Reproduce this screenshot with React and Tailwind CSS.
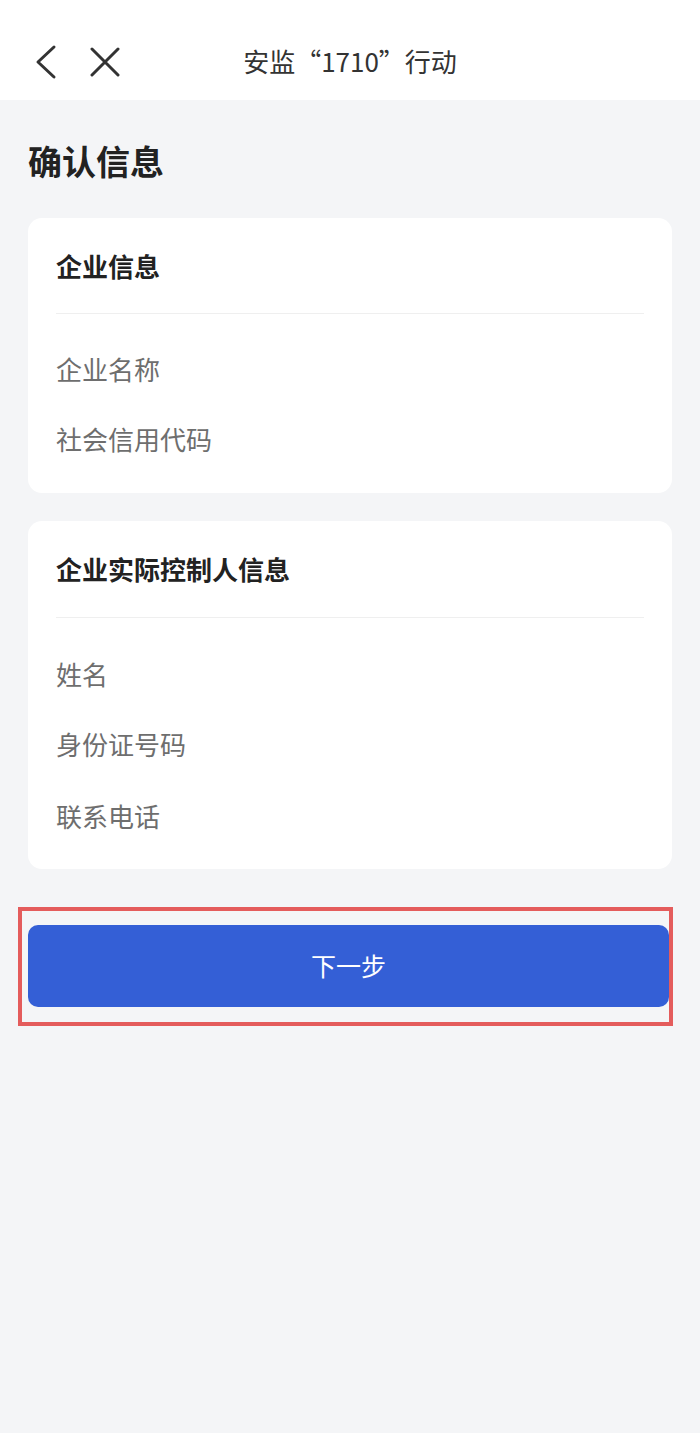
export default function App() {
  const font = { fontFamily: '"Noto Sans CJK SC", "Noto Sans", sans-serif' };
  return (
    <div className="min-h-[1433px] w-[700px] bg-[#f4f5f7]" style={font}>
      <div className="relative flex h-[100px] items-center bg-white pt-[24px]">
        <div className="flex items-center pl-[33px]">
          <svg width="26" height="36" viewBox="0 0 26 36" fill="none">
            <path d="M21 3 L5 18 L21 33" stroke="#333" strokeWidth="3" strokeLinecap="round" strokeLinejoin="round" />
          </svg>
          <svg width="32" height="30" viewBox="0 0 32 30" fill="none" className="ml-[30px]">
            <path d="M3 2 L29 28 M29 2 L3 28" stroke="#333" strokeWidth="3" strokeLinecap="round" />
          </svg>
        </div>
        <div className="absolute left-0 right-0 top-[22px] flex h-[76px] items-center justify-center text-[26px] text-[#333]">
          安监“1710”行动
        </div>
      </div>

      <div className="px-[28px]">
        <div className="pt-[37px] text-[34px] font-bold leading-[48px] text-[#222]">确认信息</div>

        <div className="mt-[33px] rounded-[14px] bg-white px-[28px] pb-[20px] pt-[30px]">
          <div className="text-[26px] font-bold leading-[36px] text-[#222]">企业信息</div>
          <div className="mt-[29px] h-px bg-[#efefef]" />
          <div className="mt-[19px]">
            <div className="flex h-[70px] items-center text-[26px] text-[#6e6e6e]">企业名称</div>
            <div className="flex h-[70px] items-center text-[26px] text-[#6e6e6e]">社会信用代码</div>
          </div>
        </div>

        <div className="mt-[28px] rounded-[14px] bg-white px-[28px] pb-[18px] pt-[30px]">
          <div className="text-[26px] font-bold leading-[36px] text-[#222]">企业实际控制人信息</div>
          <div className="mt-[30px] h-px bg-[#efefef]" />
          <div className="mt-[20px]">
            <div className="flex h-[70px] items-center text-[26px] text-[#6e6e6e]">姓名</div>
            <div className="flex h-[71px] items-center text-[26px] text-[#6e6e6e]">身份证号码</div>
            <div className="flex h-[72px] items-center text-[26px] text-[#6e6e6e]">联系电话</div>
          </div>
        </div>
      </div>

      <div className="ml-[18px] mt-[38px] w-[655px] border-[4px] border-[#e45c5c] pb-[15px] pl-[6px] pt-[14px]">
        <button className="flex h-[82px] w-full items-center justify-center rounded-[10px] bg-[#345fd6] text-[25px] text-white">
          下一步
        </button>
      </div>
    </div>
  );
}
